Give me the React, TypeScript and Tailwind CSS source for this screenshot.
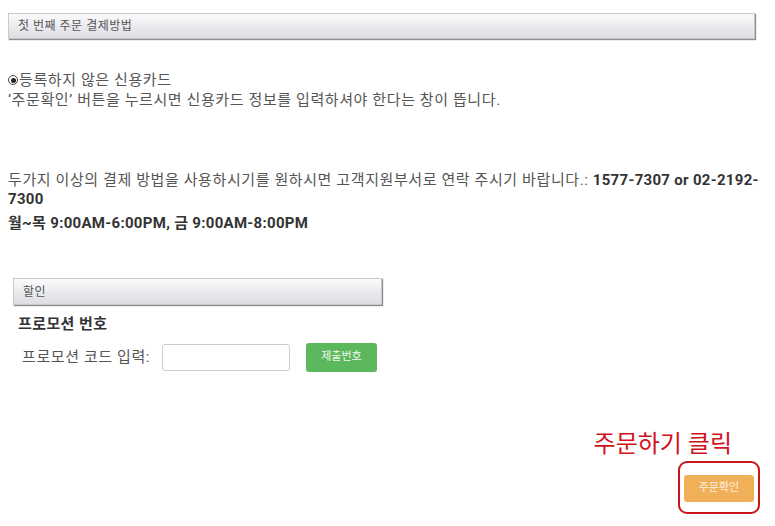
import React from "react";

const font = { fontFamily: "Roboto, 'Noto Sans CJK KR', 'Noto Sans', sans-serif" };

function Bar({ label, className }: { label: string; className?: string }) {
  return (
    <div
      className={`shrink-0 flex items-center border border-[#c9c9cc] bg-gradient-to-b from-[#fbfbfc] to-[#dcdce2] pl-[9px] text-[12px] tracking-[0.5px] text-[#555] shadow-[1px_1px_1px_rgba(0,0,0,0.45)] ${className ?? ""}`}
    >
      {label}
    </div>
  );
}

export default function App() {
  return (
    <div style={font} className="w-[775px] h-[526px] overflow-hidden bg-white pl-2 pr-5 pt-[13px] flex flex-col">
      <Bar label="첫 번째 주문 결제방법" className="h-[26px]" />

      <div className="shrink-0 mt-[31px] text-[15px] leading-[20px] tracking-[0.6px] text-[#555]">
        <div className="flex items-center">
          <span className="inline-flex h-[10px] w-[10px] items-center justify-center rounded-full border border-[#444] mr-[1px]">
            <span className="h-[5px] w-[5px] rounded-full bg-[#222]" />
          </span>
          등록하지 않은 신용카드
        </div>
        <div>‘주문확인’ 버튼을 누르시면 신용카드 정보를 입력하셔야 한다는 창이 뜹니다.</div>
      </div>

      <div className="shrink-0 mt-[61px] -mr-[15px] text-[15px] leading-[19px] tracking-[0.6px] text-[#555]">
        <div className="whitespace-nowrap">
          두가지 이상의 결제 방법을 사용하시기를 원하시면 고객지원부서로 연락 주시기 바랍니다.:{" "}
          <b className="text-[#333] tracking-[0.3px]">1577-7307 or 02-2192-</b>
        </div>
        <div className="font-bold text-[#333] tracking-[0.3px]">7300</div>
        <div className="mt-[5px] font-bold text-[#333] tracking-[0.3px]">월~목 9:00AM-6:00PM, 금 9:00AM-8:00PM</div>
      </div>

      <div className="shrink-0 mt-[45px] ml-[5px] w-[369px] flex flex-col">
        <Bar label="할인" className="h-[27px]" />
        <div className="mt-[9px] ml-[5px] text-[15px] leading-[20px] font-bold tracking-[0.4px] text-[#333]">프로모션 번호</div>
        <div className="mt-[9px] ml-[9px] flex items-center">
          <span className="text-[15px] tracking-[0.6px] text-[#555] w-[140px]">프로모션 코드 입력:</span>
          <input className="h-[27px] w-[128px] rounded-[3px] border border-[#ccc] bg-white outline-none" />
          <button className="ml-[16px] h-[29px] w-[71px] rounded-[3px] bg-[#5cb85c] text-[11px] text-white/90">
            제출번호
          </button>
        </div>
      </div>

      <div className="shrink-0 mt-[56px] -mr-[5px] flex flex-col items-end">
        <div className="mr-[28px] text-[24px] leading-[32px] text-[#d0121b]">주문하기 클릭</div>
        <div className="mt-[1px] flex h-[53px] w-[82px] items-center justify-center rounded-[9px] border-2 border-[#c8161d]">
          <button className="mt-[2px] h-[27px] w-[70px] rounded-[3px] bg-[#f0b058] text-[11px] text-white/80">
            주문확인
          </button>
        </div>
      </div>
    </div>
  );
}
